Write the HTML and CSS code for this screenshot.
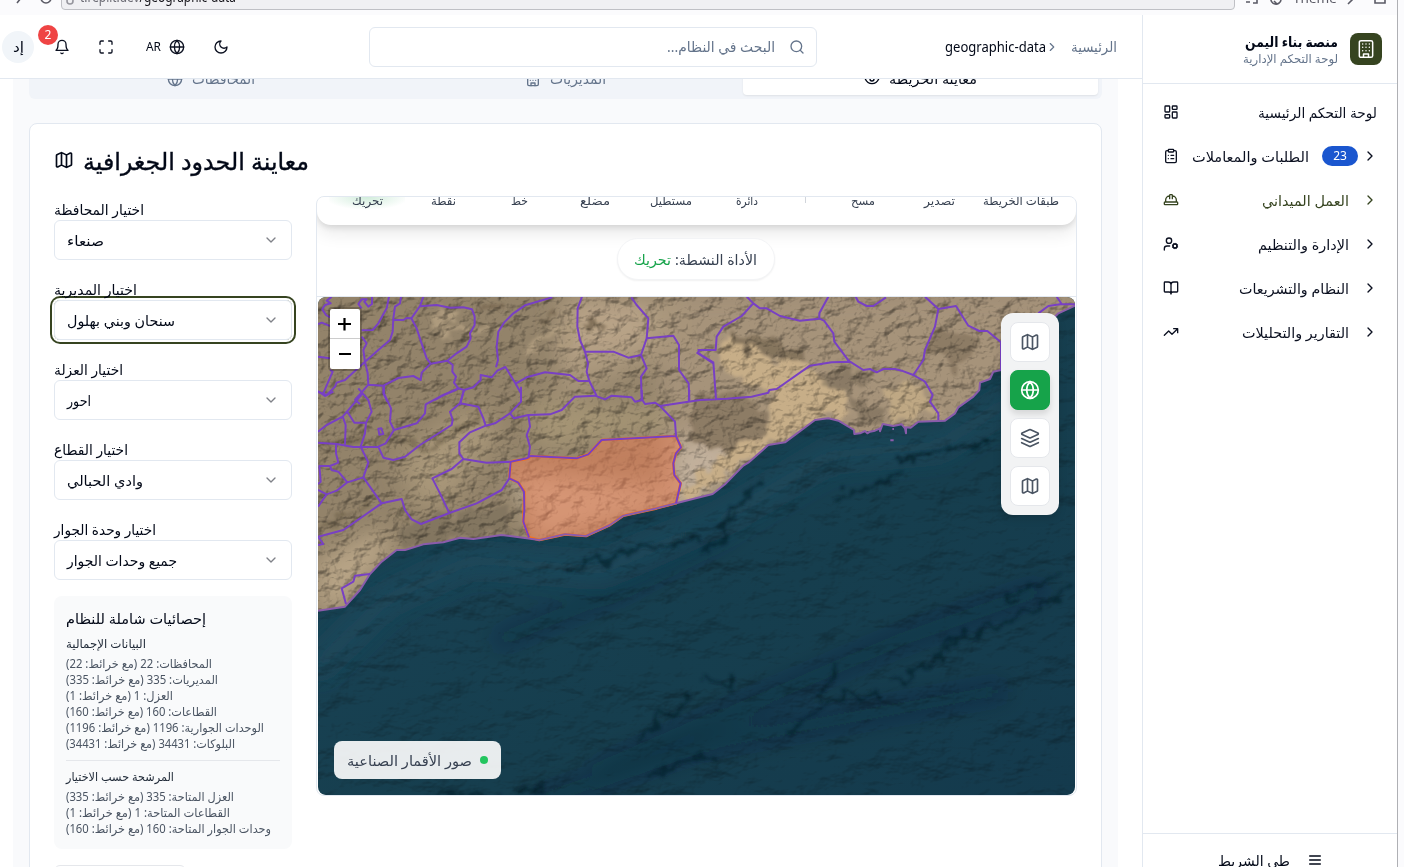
FILE: index.html
```html
<!DOCTYPE html>
<html lang="ar" dir="rtl">
<head>
<meta charset="utf-8">
<title>منصة بناء اليمن</title>
<link rel="stylesheet" href="styles.css">
</head>
<body>
<svg class="defs" width="0" height="0">
  <defs>
    <symbol id="i-map" viewBox="0 0 24 24"><path d="M14.106 5.553a2 2 0 0 0 1.788 0l3.659-1.83A1 1 0 0 1 21 4.619v12.764a1 1 0 0 1-.553.894l-4.553 2.277a2 2 0 0 1-1.788 0l-4.212-2.106a2 2 0 0 0-1.788 0l-3.659 1.83A1 1 0 0 1 3 19.381V6.618a1 1 0 0 1 .553-.894l4.553-2.277a2 2 0 0 1 1.788 0zM15 5.764v15M9 3.236v15"/></symbol>
    <symbol id="i-globe" viewBox="0 0 24 24"><circle cx="12" cy="12" r="10"/><path d="M12 2a14.5 14.5 0 0 0 0 20 14.5 14.5 0 0 0 0-20M2 12h20"/></symbol>
    <symbol id="i-layers" viewBox="0 0 24 24"><path d="m12.83 2.18a2 2 0 0 0-1.66 0L2.6 6.08a1 1 0 0 0 0 1.83l8.58 3.91a2 2 0 0 0 1.66 0l8.58-3.9a1 1 0 0 0 0-1.83ZM22 17.65l-9.17 4.16a2 2 0 0 1-1.66 0L2 17.65M22 12.65l-9.17 4.16a2 2 0 0 1-1.66 0L2 12.65"/></symbol>
    <symbol id="i-down" viewBox="0 0 24 24"><path d="m6 9 6 6 6-6"/></symbol>
    <symbol id="i-right" viewBox="0 0 24 24"><path d="m9 18 6-6-6-6"/></symbol>
    <symbol id="i-building" viewBox="0 0 24 24"><rect width="16" height="20" x="4" y="2" rx="2"/><path d="M9 22v-4h6v4M8 6h.01M16 6h.01M12 6h.01M12 10h.01M12 14h.01M16 10h.01M16 14h.01M8 10h.01M8 14h.01"/></symbol>
    <symbol id="i-eye" viewBox="0 0 24 24"><path d="M2 12s3-7 10-7 10 7 10 7-3 7-10 7-10-7-10-7Z"/><circle cx="12" cy="12" r="3"/></symbol>
    <symbol id="i-search" viewBox="0 0 24 24"><circle cx="11" cy="11" r="8"/><path d="m21 21-4.3-4.3"/></symbol>
    <symbol id="i-moon" viewBox="0 0 24 24"><path d="M12 3a6 6 0 0 0 9 9 9 9 0 1 1-9-9Z"/></symbol>
    <symbol id="i-full" viewBox="0 0 24 24"><path d="M8 3H5a2 2 0 0 0-2 2v3M21 8V5a2 2 0 0 0-2-2h-3M3 16v3a2 2 0 0 0 2 2h3M16 21h3a2 2 0 0 0 2-2v-3"/></symbol>
    <symbol id="i-bell" viewBox="0 0 24 24"><path d="M6 8a6 6 0 0 1 12 0c0 7 3 9 3 9H3s3-2 3-9M10.3 21a1.94 1.94 0 0 0 3.4 0"/></symbol>
    <symbol id="i-dash" viewBox="0 0 24 24"><rect width="7" height="9" x="3" y="3" rx="1"/><rect width="7" height="5" x="14" y="3" rx="1"/><rect width="7" height="9" x="14" y="12" rx="1"/><rect width="7" height="5" x="3" y="16" rx="1"/></symbol>
    <symbol id="i-clip" viewBox="0 0 24 24"><rect width="8" height="4" x="8" y="2" rx="1"/><path d="M16 4h2a2 2 0 0 1 2 2v14a2 2 0 0 1-2 2H6a2 2 0 0 1-2-2V6a2 2 0 0 1 2-2h2M12 11h4M12 16h4M8 11h.01M8 16h.01"/></symbol>
    <symbol id="i-hat" viewBox="0 0 24 24"><path d="M2 18a1 1 0 0 0 1 1h18a1 1 0 0 0 1-1v-2a1 1 0 0 0-1-1H3a1 1 0 0 0-1 1v2zM10 10V5a1 1 0 0 1 1-1h2a1 1 0 0 1 1 1v5M4 15v-3a6 6 0 0 1 6-6M14 6a6 6 0 0 1 6 6v3"/></symbol>
    <symbol id="i-user" viewBox="0 0 24 24"><circle cx="18" cy="15" r="3"/><circle cx="9" cy="7" r="4"/><path d="M10 15H6a4 4 0 0 0-4 4v2M21.700 16.400l-.9-.3M15.200 13.900l-.9-.3M16.600 18.700l.3-.9M19.100 12.200l.3-.9M19.600 18.700l-.4-1M16.800 12.300l-.4-1M14.300 16.600l1-.4M20.700 13.800l1-.4"/></symbol>
    <symbol id="i-book" viewBox="0 0 24 24"><path d="M12 7v14M3 18a1 1 0 0 1-1-1V4a1 1 0 0 1 1-1h5a4 4 0 0 1 4 4 4 4 0 0 1 4-4h5a1 1 0 0 1 1 1v13a1 1 0 0 1-1 1h-6a3 3 0 0 0-3 3 3 3 0 0 0-3-3z"/></symbol>
    <symbol id="i-trend" viewBox="0 0 24 24"><path d="m22 7-8.500 8.500-5-5L2 17M16 7h6v6"/></symbol>
    <symbol id="i-menu" viewBox="0 0 24 24"><path d="M4 6h16M4 12h16M4 18h16"/></symbol>
  </defs>
</svg>

<div class="window">
  <div class="browser" dir="ltr">
    <svg class="bicons" viewBox="0 0 61 15"><path d="M17 3l4-5M41 -2a5 5 0 0 0 10 0"/></svg>
    <div class="url"><svg class="lock" viewBox="0 0 10 10"><circle cx="5" cy="3" r="3"/></svg><span class="t" data-w="156"><span class="dim">t.replit.dev</span>/geographic-data</span></div>
    <svg class="bicons2" viewBox="0 0 58 15"><path d="M11 2h4M17-2h5v5h-4M36-2a5 5 0 0 0 10 2M39 1l3 3"/></svg>
    <span class="t theme" data-w="44">Theme</span>
    <svg class="bicons3" viewBox="0 0 58 15"><path d="M11 4l6-6M38-3v6h10v-6"/></svg>
  </div>

  <div class="app">
    <aside class="sidebar">
      <div class="brand">
        <span class="logo"><svg class="ic s20"><use href="#i-building"/></svg></span>
        <div class="brand-text">
          <span class="t brand-name" data-w="93">منصة بناء اليمن</span>
          <span class="t brand-sub" data-w="95">لوحة التحكم الإدارية</span>
        </div>
      </div>
      <nav class="nav">
        <a class="item first"><span class="t" data-w="119">لوحة التحكم الرئيسية</span><svg class="ic s16 end"><use href="#i-dash"/></svg></a>
        <a class="item"><svg class="ic s16"><use href="#i-right"/></svg><span class="count">23</span><span class="t" data-w="117">الطلبات والمعاملات</span><svg class="ic s16 end"><use href="#i-clip"/></svg></a>
        <a class="item active"><svg class="ic s16"><use href="#i-right"/></svg><span class="t lab" data-w="87">العمل الميداني</span><svg class="ic s16 end"><use href="#i-hat"/></svg></a>
        <a class="item"><svg class="ic s16"><use href="#i-right"/></svg><span class="t lab" data-w="91">الإدارة والتنظيم</span><svg class="ic s16 end"><use href="#i-user"/></svg></a>
        <a class="item"><svg class="ic s16"><use href="#i-right"/></svg><span class="t lab" data-w="110">النظام والتشريعات</span><svg class="ic s16 end"><use href="#i-book"/></svg></a>
        <a class="item"><svg class="ic s16"><use href="#i-right"/></svg><span class="t lab" data-w="107">التقارير والتحليلات</span><svg class="ic s16 end"><use href="#i-trend"/></svg></a>
      </nav>
      <div class="collapse"><svg class="ic s16"><use href="#i-menu"/></svg><span class="t" data-w="72">طي الشريط</span></div>
    </aside>

    <main class="main">
      <header class="top">
        <div class="crumbs"><span class="t muted" data-w="46">الرئيسية</span><svg class="ic s12"><use href="#i-right"/></svg><span class="t latin" data-w="101">geographic-data</span></div>
        <div class="search"><svg class="ic s16"><use href="#i-search"/></svg><span class="t" data-w="108">البحث في النظام...</span></div>
        <div class="actions" dir="ltr">
          <span class="avatar"><span class="t" data-w="11">إد</span></span>
          <span class="bell"><svg class="ic s16"><use href="#i-bell"/></svg><b>2</b></span>
          <svg class="ic s16 a-full"><use href="#i-full"/></svg>
          <span class="t latin a-lang" data-w="15">AR</span>
          <svg class="ic s16 a-globe"><use href="#i-globe"/></svg>
          <svg class="ic s16 a-moon"><use href="#i-moon"/></svg>
        </div>
      </header>

      <div class="content">
        <div class="tabs">
          <div class="tab on"><span class="t" data-w="88">معاينة الخريطة</span><svg class="ic s16"><use href="#i-eye"/></svg></div>
          <div class="tab"><span class="t" data-w="56">المديريات</span><svg class="ic s16"><use href="#i-building"/></svg></div>
          <div class="tab"><span class="t" data-w="63">المحافظات</span><svg class="ic s16"><use href="#i-globe"/></svg></div>
        </div>

        <section class="card" dir="ltr">
          <h2><svg class="ic s20"><use href="#i-map"/></svg><span class="t" data-w="226">معاينة الحدود الجغرافية</span></h2>
          <div class="cols">
            <div class="filters">
              <div class="field"><span class="t" data-w="90">اختيار المحافظة</span><div class="select"><span class="t" data-w="37">صنعاء</span><svg class="ic s16"><use href="#i-down"/></svg></div></div>
              <div class="field"><span class="t" data-w="83">اختيار المديرية</span><div class="select focus"><span class="t" data-w="108">سنحان وبني بهلول</span><svg class="ic s16"><use href="#i-down"/></svg></div></div>
              <div class="field"><span class="t" data-w="69">اختيار العزلة</span><div class="select"><span class="t" data-w="24">احور</span><svg class="ic s16"><use href="#i-down"/></svg></div></div>
              <div class="field"><span class="t" data-w="74">اختيار القطاع</span><div class="select"><span class="t" data-w="76">وادي الحبالي</span><svg class="ic s16"><use href="#i-down"/></svg></div></div>
              <div class="field"><span class="t" data-w="102">اختيار وحدة الجوار</span><div class="select"><span class="t" data-w="110">جميع وحدات الجوار</span><svg class="ic s16"><use href="#i-down"/></svg></div></div>

              <div class="stats">
                <span class="t st" data-w="140">إحصائيات شاملة للنظام</span>
                <span class="t sh" data-w="80">البيانات الإجمالية</span>
                <span class="t sl" data-w="146">المحافظات: 22 (مع خرائط: 22)</span>
                <span class="t sl" data-w="152">المديريات: 335 (مع خرائط: 335)</span>
                <span class="t sl" data-w="107">العزل: 1 (مع خرائط: 1)</span>
                <span class="t sl" data-w="151">القطاعات: 160 (مع خرائط: 160)</span>
                <span class="t sl" data-w="198">الوحدات الجوارية: 1196 (مع خرائط: 1196)</span>
                <span class="t sl" data-w="169">البلوكات: 34431 (مع خرائط: 34431)</span>
                <div class="rule"></div>
                <span class="t sh" data-w="108">المرشحة حسب الاختيار</span>
                <span class="t sl" data-w="168">العزل المتاحة: 335 (مع خرائط: 335)</span>
                <span class="t sl" data-w="164">القطاعات المتاحة: 1 (مع خرائط: 1)</span>
                <span class="t sl" data-w="205">وحدات الجوار المتاحة: 160 (مع خرائط: 160)</span>
              </div>
              <div class="more"></div>
            </div>

            <div class="mapframe">
              <div class="tools">
                <span class="tool sel"><span class="t" data-w="31">تحريك</span></span>
                <span class="tool"><span class="t" data-w="25">نقطة</span></span>
                <span class="tool"><span class="t" data-w="17">خط</span></span>
                <span class="tool"><span class="t" data-w="30">مضلع</span></span>
                <span class="tool"><span class="t" data-w="42">مستطيل</span></span>
                <span class="tool"><span class="t" data-w="22">دائرة</span></span>
                <span class="sep"></span>
                <span class="tool"><span class="t" data-w="24">مسح</span></span>
                <span class="tool"><span class="t" data-w="31">تصدير</span></span>
                <span class="tool wide"><span class="t" data-w="76">طبقات الخريطة</span></span>
              </div>
              <div class="pillrow"><div class="pill" dir="rtl"><span class="t" data-w="82">الأداة النشطة:</span><span class="t green" data-w="37">تحريك</span></div></div>
              <div class="map">
                <svg class="terrain" viewBox="318 297 757 498">
                  <defs>
                    <clipPath id="land"><path transform="translate(310 390) scale(.33333)" d="M20-285V662L105 650 150 600 180 552 215 515 260 480 285 480 340 463 400 457 450 443 490 447 575 435 650 445 688 450 765 433 828 438 900 405 940 377 1040 355 1098 340 1208 312 1245 283 1300 227 1315 218 1375 165 1425 157 1515 90 1555 85 1585 92 1632 120 1633 132 1650 130 1665 123 1680 125 1710 115 1718 102 1750 108 1775 103 1785 115 1802 113 1825 95 1905 92 1935 70 1945 52 1990 20 2008 0 2010-22 2040-33 2050-55 2073-60 2245-230 2300-255V-285Z"/></clipPath>
                    <filter id="relief" x="0" y="0" width="1" height="1" color-interpolation-filters="sRGB"><feTurbulence type="fractalNoise" baseFrequency=".06 .08" numOctaves="5" seed="8"/><feDiffuseLighting surfaceScale="5" diffuseConstant="1.18" lighting-color="#fff"><feDistantLight azimuth="225" elevation="58"/></feDiffuseLighting></filter>
                    <filter id="seabed" x="0" y="0" width="1" height="1" color-interpolation-filters="sRGB"><feTurbulence type="fractalNoise" baseFrequency=".018 .03" numOctaves="5" seed="21"/><feDiffuseLighting surfaceScale="6" diffuseConstant="1.13" lighting-color="#fff"><feDistantLight azimuth="235" elevation="62"/></feDiffuseLighting></filter>
                    <filter id="rough" x="-5%" y="-5%" width="110%" height="110%"><feTurbulence type="fractalNoise" baseFrequency=".06" numOctaves="4" seed="4"/><feDisplacementMap in="SourceGraphic" scale="26" xChannelSelector="R" yChannelSelector="G"/><feGaussianBlur stdDeviation="1.5"/></filter>
                    <filter id="soft" x="-50%" y="-50%" width="200%" height="200%"><feGaussianBlur stdDeviation="11"/></filter>
                    <linearGradient id="sea" x1="0" y1="0" x2="1" y2="1"><stop offset="0" stop-color="#1a4558"/><stop offset=".6" stop-color="#163e4e"/><stop offset="1" stop-color="#143a4d"/></linearGradient>
                  </defs>
                  <rect x="318" y="297" width="757" height="498" fill="url(#sea)"/>
                  <g filter="url(#soft)" fill="none" stroke-linecap="round">
                    <path d="M318 665L385 600 470 560 600 570 720 520 830 455 940 445 1010 400" stroke="#1e5064" stroke-width="26" opacity=".5"/>
                    <path d="M500 640L620 590 720 535M600 770L760 700 900 640 1040 590M540 800L700 745 1000 690" stroke="#0b2635" stroke-width="16" opacity=".3"/>
                  </g>
                  <g filter="url(#rough)" fill="none" stroke="#021c28" stroke-width="4" opacity=".6"><path d="M700 555L715 545 728 520 745 500 765 485M565 575L600 560 650 545 705 540M600 805L610 800M650 778L690 755 720 762M705 680L732 682 735 692M820 700L835 670 840 660M640 740L655 720 690 700M890 680L930 665 950 640 1000 625 1070 590M515 790L545 785M950 650L965 630M1010 600L1060 570M835 500L860 490 900 475M900 460L990 440M790 730L850 690 880 700M600 805L612 790M420 800L500 795"/></g>
                  <rect class="mul" x="318" y="297" width="757" height="498" filter="url(#seabed)" opacity=".6"/>
                  <g clip-path="url(#land)">
                    <rect x="318" y="297" width="757" height="320" fill="#93836a"/>
                    <g filter="url(#soft)">
                      <path d="M660 290H1080V480H660Z" fill="#a6937a"/>
                      <path d="M560 297H680V350L560 400Z" fill="#a9967c"/>
                      <path d="M400 460L450 420 480 410 500 430 450 500 420 510Z" fill="#a99779"/>
                      <path d="M318 560L380 530 395 545 340 610 318 610Z" fill="#b8a486"/>
                      <path d="M570 300H650V345L560 360Z" fill="#b8a387"/>
                      <path d="M530 400L680 410 660 430 540 450Z" fill="#a59475"/>
                      <path d="M510 470L680 490 670 505 540 540Z" fill="#c0b098"/>
                      <path d="M674 440L740 440 750 450 690 510 670 500Z" fill="#c2b19c"/>
                    </g>
                    <g filter="url(#rough)">
                      <path d="M722 335L770 360 805 362 838 380 846 412 820 418 760 450 690 500 678 495 735 440 775 420 770 395 725 375Z" fill="#c7ae88"/>
                      <path d="M728 330L800 350 805 360 790 362 730 345Z" fill="#85745d"/>
                      <path d="M818 375L850 365 870 382 850 388 855 395 890 412 868 428 852 425 858 410 845 395Z" fill="#8a7a65"/>
                      <path d="M925 335L960 330 975 345 960 370 930 355ZM690 400L730 390 770 410 768 435 725 450 690 440Z" fill="#8d7c65"/>
                      <path d="M395 525L510 505 520 530 400 545Z" fill="#837661"/>
                      <path d="M320 445L410 440 430 452 460 425 480 415M320 530L370 500" fill="none" stroke="#6c5f49" stroke-width="5" opacity=".55"/>
                      <path d="M880 388L915 385 935 415 900 420Z" fill="#bfa884"/>
                      <path d="M430 320L455 315M440 330L500 325M530 350L560 330M560 345L580 320" fill="none" stroke="#af9b7e" stroke-width="7"/>
                      <path d="M585 320L600 330M540 320L555 312M480 310L510 302" fill="none" stroke="#7d6c55" stroke-width="4"/>
                    </g>
                    <rect class="mul" x="318" y="297" width="757" height="320" filter="url(#relief)" opacity=".55"/>
                  </g>
                  <g transform="translate(310 390) scale(.33333)" fill="none" stroke-linejoin="round">
                    <path d="M602 215L655 205 662 198 800 205 835 193 875 150 1098 138 1113 172 1098 190 1090 220 1093 255 1112 280 1098 340 1040 355 940 377 900 405 828 438 765 433 688 450 657 442 640 395 643 305 625 278 598 265Z" fill="#ea7d55" fill-opacity=".52" stroke="#f97316" stroke-width="8"/>
                    <path class="coast" d="M24 662L105 650 150 600 180 552 215 515 260 480 285 480 340 463 400 457 450 443 490 447 575 435 650 445 688 450 765 433 828 438 900 405 940 377 1040 355 1098 340 1208 312 1245 283 1300 227 1315 218 1375 165 1425 157 1515 90 1555 85 1585 92 1632 120 1633 132 1650 130 1665 123 1672 130 1680 125 1695 122 1710 115 1710 124 1718 102 1750 108 1775 103 1785 115 1788 130 1788 112 1802 113 1825 95 1905 92 1935 70 1945 52 1990 20 2008 0 2010-22 2040-33 2050-55 2073-60 2245-230 2300-255M1741 151h10M1747 117h5"/>
                    <path class="line" d="M24 158L80 162 130 171 205 170 227 160 252 120 240 95 243 55 222 10V-13M252 120L320 100 345 70 347 43 400 15 437 0 445-5M24 125L50 105 98 80 158 10 145-5M98 80L107 105 105 163M158 10L175 30 185 65 168 98H133L112 65M168 98L165 130 152 170 175 217 160 262 215 340M24 3L45 18 70 5M205 170L220 203 250 210 285 200 330 165 425 105 428 90 420 65 450 40 462 0M450 40L505 50 520 85 527 107 555 100 600 70 633 35V-10M527 107L480 127 448 157V190L460 207 530 218 602 215 650 205 662 198 800 205 835 193 875 150 1098 138M600 70L612 85 655 75 720 73 755 60 795 20 855 17 885 28 905 17 965 22 975 35 997 30 1005 42 1035 38 1050 48 1170 30M655 75L660 110 650 135 660 170 655 205M1050 48L1095 95 1098 138 1113 172 1098 190 1090 220 1093 255 1112 280 1098 340M602 215L598 265 575 300 500 340 418 369 333 402 305 388 285 360 275 327 215 340 100 420 24 440M460 207L425 237 367 265 390 310 418 369M598 265L625 278 642 305 643 360 640 395 657 442M205 116L214 115 220 132 208 134ZM180 552L135 557 130 575 95 595 108 642M78 162V190L85 218 60 228H28L32 275 24 282M60 228L65 240 85 245 112 277 80 302 50 313 24 350M112 277L160 262M24 300L50 313M24 440L40 462 24 465M995 0L997 30M1138 0L1136 38"/>
                  </g>
                  <g transform="translate(310 180) scale(.33333)">
                    <path class="line" d="M24 432L35 428 60 438M65 350L50 362 62 370 45 375 37 388 48 405 60 412M186 350V372L175 380 163 365 170 358 155 358 145 372 155 385M237 350L230 385 205 430 188 450 155 451M273 350L270 370 255 380 250 415 248 455 240 480 205 510 165 545M252 420H280L290 414 304 415M155 470L170 490 160 510 165 545 173 580 175 614M340 350L330 378 304 415 320 445 338 500 350 535 362 551 412 542 440 520 470 500 482 475 480 460 494 435V410L486 388 460 382 420 383 380 375 330 379M362 551L335 578 332 600 310 588 265 594 220 617 175 614 135 660 150 672M220 617V640L232 665M24 530L60 535M60 570L68 575 55 605 40 640M24 636L50 645 75 620 80 608 105 600 165 545M412 542L428 555 427 575 438 590 432 608 445 625 462 630 490 622 512 600V585L545 592 562 572 586 561 595 575 617 611 633 640V665M445 625L395 648 375 660M462 630L450 675M727 352L645 376 610 400 582 428 565 455 560 500 564 540 558 562M617 611L650 592 705 577 780 585 805 603H838M816 350L803 385 802 440 810 480 825 515 834 550 830 575 838 603 860 648M825 515H910L955 533 993 525M964 352L980 375 1015 415 1010 475 993 525 1010 565 993 590 995 660M1010 475L1090 467 1107 495V570L1136 610 1138 660M1170 510L1163 518 1180 530 1210 550"/>
                  </g>
                  <g transform="translate(700 180) scale(.33333)">
                    <path class="line" d="M-7 510H47L50 470 70 440 125 408 160 370 140 350M160 370L180 385H200L240 408 300 422 358 416 372 422 400 460 403 485 448 545M385 350L358 400V416M467 350L475 365 500 378H520L558 352M-10 518L40 547 48 657M0 660L80 656 155 650 205 638 208 630 230 627 330 557 395 547 450 545 490 570 510 567 530 577 550 567H585L605 572 640 585 675 605 698 645 690 665 715 700V720M675 350L715 387 768 378 805 437 838 453H862L903 487V572M715 387L705 440 675 510 670 540 640 585M1070 350L1085 372 1125 373M1085 372L1045 378 1015 400"/>
                  </g>
                </svg>
                <div class="zoomer"><span><svg viewBox="0 0 30 30"><path d="M8 15h13M14.500 9v12.500"/></svg></span><span><svg viewBox="0 0 30 30"><path d="M9 15h12"/></svg></span></div>
                <div class="switcher">
                  <span><svg class="ic s20"><use href="#i-map"/></svg></span>
                  <span class="on"><svg class="ic s20"><use href="#i-globe"/></svg></span>
                  <span><svg class="ic s20"><use href="#i-layers"/></svg></span>
                  <span><svg class="ic s20"><use href="#i-map"/></svg></span>
                </div>
                <div class="maplabel"><span class="t" data-w="125">صور الأقمار الصناعية</span><i></i></div>
              </div>
            </div>
          </div>
        </section>
      </div>
    </main>
  </div>
</div>
<script src="fit.js"></script>
</body>
</html>
```
FILE: styles.css
```css
* { box-sizing: border-box; }
html { direction: ltr; }
body { margin: 0; background: #fbfbfd; font-family: "Noto Sans", "DejaVu Sans", sans-serif; font-size: 14px; color: #020817; direction: ltr; overflow: hidden; }
.defs { display: block; position: absolute; }
.window { width: 1398px; height: 867px; overflow: hidden; background: #fff; border-right: 1px solid #afb0b4; display: flex; flex-direction: column; }
.t { display: block; flex: none; white-space: nowrap; direction: rtl; text-align: right; transform-origin: right center; line-height: 20px; padding-top: 1px; }
.latin { direction: ltr; text-align: left; transform-origin: left center; }
.ic { display: block; flex: none; fill: none; stroke: currentColor; stroke-width: 2; stroke-linecap: round; stroke-linejoin: round; }
.s12 { width: 14px; height: 14px; }
.s16 { width: 16px; height: 16px; }
.s20 { width: 20px; height: 20px; }

.browser { height: 15px; flex: none; background: #fbfbfd; display: flex; overflow: hidden; color: #5b5b66; }
.browser svg { fill: none; stroke: #5b5b66; stroke-width: 1.6; flex: none; }
.browser .t { direction: ltr; text-align: left; transform-origin: left center; }
.bicons { width: 61px; height: 15px; }
.bicons2 { width: 58px; height: 15px; }
.bicons3 { width: 58px; height: 15px; }
.url { width: 1174px; height: 30px; margin-top: -20px; border: 1px solid #bfc0c5; border-radius: 4px; background: #f0f0f3; padding: 5px 0 0 3px; display: flex; color: #15141a; }
.url .lock { width: 10px; height: 10px; margin: 12px 5px 0 0; opacity: .6; }
.dim { color: #6b6b74; }
.theme { margin-top: -13px; font-size: 13px; }

.app { flex: 1; min-height: 0; display: flex; direction: rtl; }
.sidebar { width: 255px; flex: none; border-left: 1px solid #e2e8f0; display: flex; flex-direction: column; background: #fff; }
.brand { height: 69px; flex: none; border-bottom: 1px solid #e2e8f0; padding: 0 15px; display: flex; align-items: center; gap: 12px; }
.logo { width: 32px; height: 32px; border-radius: 8px; background: #364420; color: #fff; display: grid; place-items: center; }
.logo .ic { stroke-width: 1.8; }
.brand-text { display: flex; flex-direction: column; }
.brand-name { font-weight: 700; font-size: 14px; line-height: 17px; }
.brand-sub { font-size: 12px; line-height: 16px; color: #64748b; }
.nav { flex: 1; padding: 6px 19px 0 20px; color: #0b1020; }
.item { height: 44px; display: flex; align-items: center; }
.item.first { padding-right: 1px; }
.item .lab { margin-right: 13px; }
.item .end { margin-right: auto; }
.active { color: #364420; }
.count { width: 36px; height: 20px; border-radius: 10px; background: #1a56cf; color: #fff; font-size: 12px; line-height: 20px; text-align: center; margin: 0 4px 0 13px; }
.collapse { height: 34px; flex: none; border-top: 1px solid #e2e8f0; padding: 16px 74px 0 0; display: flex; gap: 17px; }
.collapse .ic { margin-top: 2px; }

.main { flex: 1; min-width: 0; display: flex; flex-direction: column; }
.top { height: 64px; flex: none; border-bottom: 1px solid #e2e8f0; display: flex; align-items: center; padding-right: 25px; background: #fff; }
.crumbs { display: flex; align-items: center; width: 300px; }
.crumbs .ic { color: #64748b; margin: 0 12px 0 -1px; }
.muted { color: #64748b; }
.search { width: 448px; height: 40px; border: 1px solid #e2e8f0; border-radius: 6px; display: flex; align-items: center; gap: 14px; padding-right: 11px; color: #64748b; }
.actions { width: 369px; display: flex; align-items: center; }
.avatar { width: 32px; height: 32px; margin-left: 2px; border-radius: 50%; background: #f1f5f9; display: grid; place-items: center; }
.bell { position: relative; margin-left: 20px; }
.bell b { position: absolute; left: -16px; top: -14px; width: 20px; height: 20px; border-radius: 50%; background: #ef4444; color: #fff; font: 12px/20px "Noto Sans"; text-align: center; }
.bell, .a-full, .a-globe, .a-moon { color: #0b1020; }
.a-full { margin-left: 28px; }
.a-lang { margin-left: 32px; font-size: 12px; }
.a-globe { margin-left: 8px; }
.a-moon { margin-left: 28px; }

.content { flex: 1; min-height: 0; overflow: hidden; width: 1105px; margin-right: 24px; background: #f9fafc; padding: 0 16px; }
.tabs { width: 1073px; height: 40px; margin-top: -20px; border-radius: 6px; background: #f1f4f9; padding: 4px; display: flex; }
.tab { flex: 1; display: flex; align-items: center; justify-content: center; gap: 9px; color: #64748b; border-radius: 4px; }
.tab .t { padding-top: 0; }
.tab.on { background: #fff; color: #020817; box-shadow: 0 1px 2px rgba(0,0,0,.08); }
.card { width: 1073px; height: 900px; margin-top: 24px; border: 1px solid #e2e8f0; border-radius: 8px; background: #fff; padding: 24px; }
.card h2 { margin: 0; height: 24px; display: flex; align-items: center; gap: 9px; font-size: 24px; font-weight: 500; -webkit-text-stroke: .35px currentColor; }
.card h2 .t { line-height: 24px; padding-top: 1px; }
.cols { display: flex; gap: 24px; margin-top: 24px; }
.filters { width: 238px; flex: none; }
.field { height: 80px; display: flex; flex-direction: column; align-items: flex-start; }
.field > .t { height: 24px; line-height: 26px; }
.select { width: 238px; height: 40px; border: 1px solid #e2e8f0; border-radius: 6px; padding: 0 12px; display: flex; align-items: center; justify-content: space-between; }
.select .ic { color: #808289; stroke-width: 2; }
.focus { box-shadow: 0 0 0 2px #fff, 0 0 0 4px #364420; }
.stats { width: 238px; height: 253px; border-radius: 8px; background: #f9fafb; padding: 12px; display: flex; flex-direction: column; align-items: flex-start; }
.st { height: 20px; font-weight: 500; margin-bottom: 8px; }
.sh { height: 16px; font-size: 12px; line-height: 16px; color: #1f2937; margin-bottom: 4px; padding-top: 0; }
.sl { height: 16px; font-size: 12px; line-height: 16px; color: #4b5563; padding-top: 0; }
.rule { height: 1px; width: 214px; background: #e5e7eb; margin: 8px 0; flex: none; }
.more { width: 132px; height: 36px; border: 1px solid #e5e7eb; border-radius: 6px; margin-top: 16px; }

.mapframe { width: 761px; height: 600px; border: 1px solid #e2e8f0; border-radius: 8px; overflow: hidden; background: #fff; }
.tools { position: relative; height: 28px; margin-bottom: 1px; border-radius: 0 0 14px 14px; box-shadow: 0 8px 18px rgba(0,0,0,.09), 0 2px 6px rgba(0,0,0,.12); display: flex; padding-left: 12px; background: #fff; color: #374151; }
.tool { width: 76px; display: flex; justify-content: center; }
.tool .t { font-size: 12px; line-height: 16px; margin-top: -5px; }
.tool.sel { background: radial-gradient(ellipse 42px 13px at 50% 0, rgba(22,163,74,.2), transparent); }
.wide { width: 88px; }
.sep { width: 40px; display: flex; justify-content: center; }
.sep::before { content: ""; width: 1px; height: 6px; background: #d1d5db; }
.pillrow { height: 71px; border-bottom: 1px solid #e2e8f0; padding: 12px 0 0 300px; }
.pill { width: 158px; height: 42px; border-radius: 21px; border: 1px solid #f3f4f6; box-shadow: 0 1px 2px rgba(0,0,0,.06); background: #fff; display: flex; align-items: center; gap: 4px; padding-right: 17px; color: #374151; position: relative; }
.green { color: #16a34a; }
.map { position: relative; width: 759px; height: 498px; border-radius: 8px; overflow: hidden; }
.terrain { display: block; width: 757px; height: 498px; margin-left: 1px; border-radius: 8px; }
.mul { mix-blend-mode: multiply; }
.line { fill: none; stroke: #7840c4; stroke-width: 6; stroke-linejoin: round; }
.coast { fill: none; stroke: #8a5cab; stroke-width: 6; }
.zoomer { position: absolute; left: 13px; top: 12px; width: 30px; height: 60px; background: #fff; border-radius: 2px; box-shadow: 0 0 0 2px rgba(0,0,0,.22); }
.zoomer span { display: block; height: 30px; }
.zoomer span:first-child { border-bottom: 1px solid #ccc; }
.zoomer svg { display: block; width: 30px; height: 30px; stroke: #000; stroke-width: 2.200; }
.switcher { position: absolute; left: 684px; top: 16px; width: 58px; height: 202px; border-radius: 12px; background: #f2f3f4; padding: 9px; display: flex; flex-direction: column; gap: 8px; color: #4b5563; box-shadow: 0 4px 8px rgba(0,0,0,.12); }
.switcher span { width: 40px; height: 40px; border: 1px solid #e5e7eb; border-radius: 8px; background: #fff; display: grid; place-items: center; }
.switcher .on { background: #16a34a; border-color: #16a34a; color: #fff; box-shadow: 0 4px 6px rgba(0,0,0,.12); }
.maplabel { position: absolute; left: 17px; top: 444px; width: 167px; height: 38px; border-radius: 8px; background: rgba(255,255,255,.9); display: flex; align-items: center; gap: 8px; padding-left: 13px; color: #374151; }
.maplabel i { width: 8px; height: 8px; border-radius: 50%; background: #22c55e; }
```
FILE: fit.js
```js
// Scale each label horizontally to its column width.
document.querySelectorAll('.t[data-w]').forEach(function (el) {
  var w = Number(el.dataset.w);
  var range = document.createRange();
  range.selectNodeContents(el);
  var natural = range.getBoundingClientRect().width;
  el.style.width = w + 'px';
  el.style.transform = 'scaleX(' + (w / natural).toFixed(4) + ')';
});
```
